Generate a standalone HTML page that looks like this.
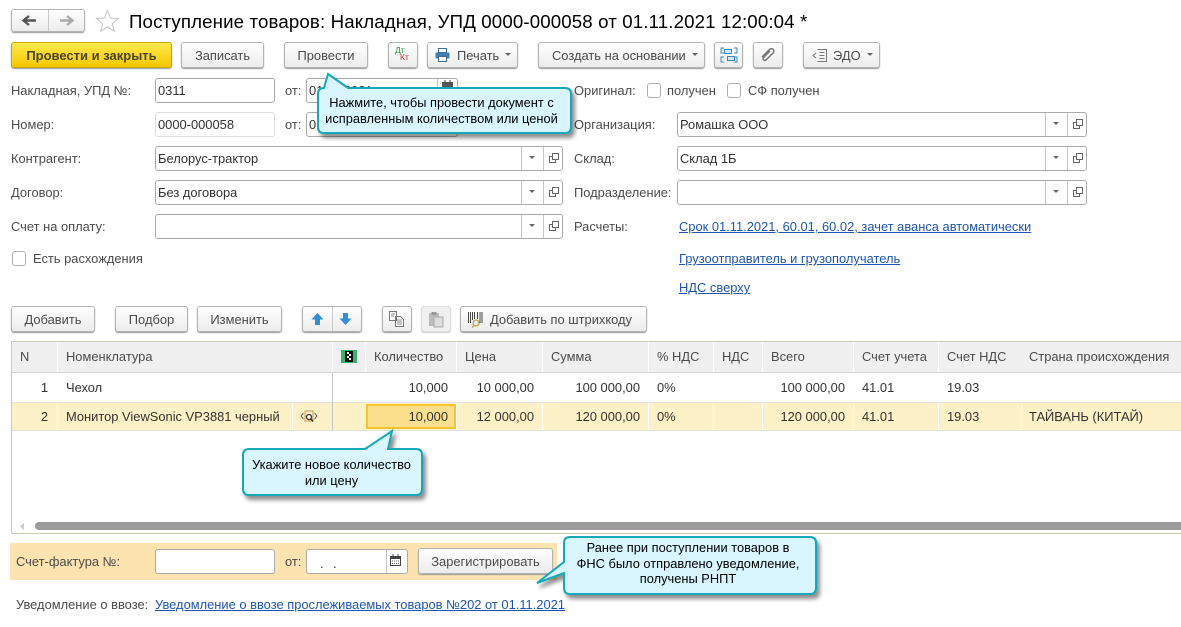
<!DOCTYPE html>
<html lang="ru"><head><meta charset="utf-8"><title>Поступление товаров</title>
<style>
html,body{margin:0;padding:0;background:#fff}
#p{position:relative;width:1181px;height:627px;overflow:hidden;background:#fff;font:12.9px "Liberation Sans",sans-serif;color:#4b4b4b}
#p div,#p span,#p a{position:absolute;white-space:nowrap;box-sizing:border-box}
.t{line-height:14px;margin-top:1px}
.r{text-align:right}
.b{height:26px;border:1px solid #b4b4b4;border-radius:3px;background:linear-gradient(#fff,#ececec);box-shadow:0 1px 1px #999;text-align:center;line-height:26px;color:#4b4b4b}
.f{height:25px;border:1px solid #ababab;border-radius:3px;background:#fff;line-height:23px;padding-left:2px;color:#333}
.s{width:1px;top:0;bottom:0;background:#c4c4c4}
.a{top:10px;width:0;height:0;border-left:3px solid transparent;border-right:3px solid transparent;border-top:3px solid #666}
.l{color:#1f55b0;text-decoration:underline;line-height:14px;margin-top:1px}
.c{width:14px;height:15px;border:1px solid #b0b0b0;border-radius:3px;background:#fff}
.h{top:342px;height:30px;background:#f0f0f0;line-height:29px;color:#4b4b4b;padding-left:8px}
.m{color:#333;line-height:14px}
.o{color:#000;text-align:center;line-height:14px;font-size:12.85px}
svg{position:absolute;overflow:visible}
</style></head><body><div id="p">

<!-- nav -->
<div class="b" style="left:11px;top:9px;width:74px;height:23px"></div>
<div style="left:48px;top:10px;width:1px;height:21px;background:#c8c8c8"></div>
<svg style="left:0;top:0" width="120" height="40"><path d="M24 20.5h12M29 16l-5.500 4.500 5.500 4.500" fill="none" stroke="#555" stroke-width="2.400"/><path d="M60 20.500h12M67 16l5.500 4.500-5.500 4.500" fill="none" stroke="#aaa" stroke-width="2.400"/><path d="M107.500 10.500l3 7.500 8 .5-6.200 5 2.100 7.700-6.900-4.300-6.900 4.300 2.100-7.700-6.200-5 8-.5z" fill="#fff" stroke="#c4c4c4"/></svg>
<span style="left:129px;top:11px;font-size:18.67px;line-height:22px;color:#000;letter-spacing:.14px">Поступление товаров: Накладная, УПД 0000-000058 от 01.11.2021 12:00:04 *</span>

<!-- toolbar -->
<div class="b" style="left:11px;top:42px;width:161px;background:linear-gradient(#ffe94d,#f4c800);border-color:#c9a500;font-weight:bold;font-size:13px;color:#4b4426">Провести и закрыть</div>
<div class="b" style="left:181px;top:42px;width:83px">Записать</div>
<div class="b" style="left:284px;top:42px;width:84px">Провести</div>
<div class="b" style="left:388px;top:42px;width:30px"></div>
<span style="left:395px;top:46px;font-size:8.500px;line-height:9px;color:#1b9a3c">Дт</span>
<span style="left:400px;top:53px;font-size:8.500px;line-height:9px;color:#d9302c">Кт</span>
<div class="b" style="left:427px;top:42px;width:91px"></div>
<span style="left:457px;top:49px;line-height:14px">Печать</span>
<svg style="left:435px;top:48px" width="16" height="15"><rect x="3.500" y=".5" width="8" height="4" fill="#fff" stroke="#3f6c93"/><rect x=".5" y="4.500" width="14" height="6" rx="1" fill="#3f7fb0"/><rect x="3.500" y="8.500" width="8" height="5" fill="#fff" stroke="#3f6c93"/></svg>
<div class="a" style="left:505px;top:53px"></div>
<div class="b" style="left:538px;top:42px;width:167px"></div>
<span style="left:552px;top:49px;line-height:14px">Создать на основании</span>
<div class="a" style="left:692px;top:53px"></div>
<div class="b" style="left:714px;top:42px;width:29px"></div>
<svg style="left:720px;top:47px" width="18" height="16"><path d="M4 1H1v5h3M14 1h3v5h-3M4 15H1v-5h3M14 15h3v-5h-3" fill="none" stroke="#3b8bbd"/><rect x="4.500" y="2.500" width="7" height="4" fill="#cfe6f4" stroke="#3b8bbd"/><rect x="7.500" y="9.500" width="7" height="4" fill="#cfe6f4" stroke="#3b8bbd"/></svg>
<div class="b" style="left:753px;top:42px;width:30px"></div>
<svg style="left:760px;top:47px" width="16" height="16"><path d="M2 10l7.500-7.500c2.500-2.500 6 1 3.500 3.500L6 13c-1.500 1.500-4-1-2.500-2.500L10 4" fill="none" stroke="#777" stroke-width="1.500"/></svg>
<div class="b" style="left:803px;top:42px;width:77px"></div>
<span style="left:833px;top:49px;line-height:14px">ЭДО</span>
<svg style="left:812px;top:48px" width="17" height="15"><path d="M5.500 1.500h9v12h-9M7.500 4.500h5M7.500 7.500h5M7.500 10.500h5M4 5L1 7.500 4 10" fill="none" stroke="#777"/></svg>
<div class="a" style="left:867px;top:53px"></div>

<!-- left form -->
<span class="t" style="left:11px;top:83px">Накладная, УПД №:</span>
<div class="f" style="left:155px;top:78px;width:120px">0311</div>
<span class="t" style="left:285px;top:83px">от:</span>
<div class="f" style="left:306px;top:78px;width:152px">01.11.2021</div>
<div style="left:437px;top:79px;width:1px;height:23px;background:#c4c4c4"></div>
<svg style="left:442px;top:80px" width="12" height="13"><rect x="0" y="2" width="11" height="10" fill="#555"/><path d="M3 0v3M8 0v3" stroke="#444"/></svg>
<span class="t" style="left:11px;top:117px">Номер:</span>
<div class="f" style="left:155px;top:112px;width:120px;border-color:#ddd">0000-000058</div>
<span class="t" style="left:285px;top:117px">от:</span>
<div class="f" style="left:306px;top:112px;width:152px">01.11.2021</div>

<span class="t" style="left:11px;top:151px">Контрагент:</span>
<div class="f" style="left:155px;top:146px;width:408px">Белорус-трактор<span class="s" style="left:365px"></span><span class="s" style="left:387px"></span><span class="a" style="left:373px;top:9px"></span><svg style="left:393px;top:6px" width="12" height="11"><path d="M3.500 3.500H.5v6h6V7M3.500.5h6v6h-6z" fill="none" stroke="#666"/></svg></div>
<span class="t" style="left:11px;top:185px">Договор:</span>
<div class="f" style="left:155px;top:180px;width:408px">Без договора<span class="s" style="left:365px"></span><span class="s" style="left:387px"></span><span class="a" style="left:373px;top:9px"></span><svg style="left:393px;top:6px" width="12" height="11"><path d="M3.500 3.500H.5v6h6V7M3.500.5h6v6h-6z" fill="none" stroke="#666"/></svg></div>
<span class="t" style="left:11px;top:219px">Счет на оплату:</span>
<div class="f" style="left:155px;top:214px;width:408px"><span class="s" style="left:365px"></span><span class="s" style="left:387px"></span><span class="a" style="left:373px;top:9px"></span><svg style="left:393px;top:6px" width="12" height="11"><path d="M3.500 3.500H.5v6h6V7M3.500.5h6v6h-6z" fill="none" stroke="#666"/></svg></div>
<div class="c" style="left:12px;top:251px"></div>
<span class="t" style="left:33px;top:251px">Есть расхождения</span>

<!-- right form -->
<span class="t" style="left:574px;top:83px">Оригинал:</span>
<div class="c" style="left:647px;top:83px"></div>
<span class="t" style="left:667px;top:83px">получен</span>
<div class="c" style="left:727px;top:83px"></div>
<span class="t" style="left:748px;top:83px">СФ получен</span>
<span class="t" style="left:574px;top:117px">Организация:</span>
<div class="f" style="left:677px;top:112px;width:410px">Ромашка ООО<span class="s" style="left:367px"></span><span class="s" style="left:389px"></span><span class="a" style="left:375px;top:9px"></span><svg style="left:395px;top:6px" width="12" height="11"><path d="M3.500 3.500H.5v6h6V7M3.500.5h6v6h-6z" fill="none" stroke="#666"/></svg></div>
<span class="t" style="left:574px;top:151px">Склад:</span>
<div class="f" style="left:677px;top:146px;width:410px">Склад 1Б<span class="s" style="left:367px"></span><span class="s" style="left:389px"></span><span class="a" style="left:375px;top:9px"></span><svg style="left:395px;top:6px" width="12" height="11"><path d="M3.500 3.500H.5v6h6V7M3.500.5h6v6h-6z" fill="none" stroke="#666"/></svg></div>
<span class="t" style="left:574px;top:185px">Подразделение:</span>
<div class="f" style="left:677px;top:180px;width:410px"><span class="s" style="left:367px"></span><span class="s" style="left:389px"></span><span class="a" style="left:375px;top:9px"></span><svg style="left:395px;top:6px" width="12" height="11"><path d="M3.500 3.500H.5v6h6V7M3.500.5h6v6h-6z" fill="none" stroke="#666"/></svg></div>
<span class="t" style="left:574px;top:219px">Расчеты:</span>
<a class="l" style="left:679px;top:219px">Срок 01.11.2021, 60.01, 60.02, зачет аванса автоматически</a>
<a class="l" style="left:679px;top:251px">Грузоотправитель и грузополучатель</a>
<a class="l" style="left:679px;top:280px">НДС сверху</a>

<!-- table toolbar -->
<div class="b" style="left:11px;top:306px;width:84px">Добавить</div>
<div class="b" style="left:115px;top:306px;width:73px">Подбор</div>
<div class="b" style="left:197px;top:306px;width:85px">Изменить</div>
<div class="b" style="left:302px;top:306px;width:60px"></div>
<div style="left:332px;top:307px;width:1px;height:24px;background:#c8c8c8"></div>
<svg style="left:302px;top:306px" width="60" height="26"><path d="M15.500 7l6 6.500h-3.500V19h-5v-5.500H9.500z" fill="#2f8fd8"/><path d="M43.500 19l-6-6.500H41V7h5v5.500h3.500z" fill="#2f8fd8"/></svg>
<div class="b" style="left:382px;top:306px;width:30px"></div>
<svg style="left:389px;top:311px" width="16" height="16"><path d="M.5.5h7v9h-7zM6.500 5.500h5l3 3v7h-8z" fill="#fff" stroke="#777"/><path d="M2 3h4M2 5h3M8 9h5M8 11h5M8 13h5" stroke="#888"/></svg>
<div class="b" style="left:421px;top:306px;width:30px;background:#f0f0f0;border-color:#ddd;box-shadow:0 1px 1px #ccc"></div>
<svg style="left:428px;top:311px" width="16" height="16"><path d="M1 2h10v13H1z" fill="#bbb"/><path d="M6 6h9v10H6z" fill="#ddd" stroke="#aaa"/><rect x="3.500" y="1" width="5" height="3" fill="#999"/></svg>
<div class="b" style="left:460px;top:306px;width:187px"></div>
<span style="left:490px;top:313px;line-height:14px">Добавить по штрихкоду</span>
<svg style="left:468px;top:312px" width="16" height="16"><path d="M.5 0v11M2.500 0v11M4.500 0v8M6.500 0v7M9.500 0v7M12 0v11M14 0v11" stroke="#444"/><circle cx="8" cy="11" r="3" fill="#dfeef7" stroke="#c9a142" stroke-width="1.300"/><path d="M6 13.500l-2 2" stroke="#c9a142" stroke-width="1.500"/></svg>

<!-- table -->
<div style="left:11px;top:341px;width:1170px;height:193px;border-top:1px solid #cfc9b2;border-left:1px solid #cfc9b2;border-bottom:1px solid #cfc9b2"></div>
<div class="h" style="left:12px;width:45px">N</div>
<div class="h" style="left:58px;width:274px">Номенклатура</div>
<div class="h" style="left:333px;width:32px"></div>
<div class="h" style="left:366px;width:90px">Количество</div>
<div class="h" style="left:457px;width:85px">Цена</div>
<div class="h" style="left:543px;width:105px">Сумма</div>
<div class="h" style="left:649px;width:64px">% НДС</div>
<div class="h" style="left:714px;width:48px">НДС</div>
<div class="h" style="left:763px;width:90px">Всего</div>
<div class="h" style="left:854px;width:84px">Счет учета</div>
<div class="h" style="left:939px;width:82px">Счет НДС</div>
<div class="h" style="left:1021px;width:160px">Страна происхождения</div>
<svg style="left:341px;top:350px" width="16" height="13"><rect width="16" height="13" fill="#37b36b"/><rect x="4" y="1" width="8" height="11" fill="#111"/><path d="M6 2h2v2H6zM8 4h2v2H8zM6 6h2v2H6zM8 8h2v2H8z" fill="#fff"/></svg>
<div style="left:12px;top:372px;width:1169px;height:1px;background:#d4d4d4"></div>

<div style="left:12px;top:402px;width:1169px;height:1px;background:#e2e2e2"></div>
<div style="left:12px;top:403px;width:1169px;height:27px;background:#fdf1c8"></div>
<div style="left:12px;top:430px;width:1169px;height:1px;background:#e2e2e2"></div>
<div style="left:57px;top:403px;width:1px;height:27px;background:#fff"></div>
<div style="left:292px;top:403px;width:1px;height:27px;background:#fff"></div>
<div style="left:332px;top:373px;width:1px;height:58px;background:#c8c8c8"></div>
<div style="left:456px;top:403px;width:1px;height:27px;background:#fff"></div>
<div style="left:542px;top:403px;width:1px;height:27px;background:#fff"></div>
<div style="left:648px;top:403px;width:1px;height:27px;background:#fff"></div>
<div style="left:713px;top:403px;width:1px;height:27px;background:#fff"></div>
<div style="left:762px;top:403px;width:1px;height:27px;background:#fff"></div>
<div style="left:853px;top:403px;width:1px;height:27px;background:#fff"></div>
<div style="left:938px;top:403px;width:1px;height:27px;background:#fff"></div>
<div style="left:1021px;top:403px;width:1px;height:27px;background:#fff"></div>
<div style="left:366px;top:404px;width:90px;height:25px;background:#fbdf8c;border:2px solid #f5c52e"></div>

<span class="m r" style="left:20px;width:28px;top:381px">1</span>
<span class="m" style="left:66px;top:381px">Чехол</span>
<span class="m r" style="left:380px;width:68px;top:381px">10,000</span>
<span class="m r" style="left:460px;width:74px;top:381px">10 000,00</span>
<span class="m r" style="left:550px;width:90px;top:381px">100 000,00</span>
<span class="m" style="left:657px;top:381px">0%</span>
<span class="m r" style="left:765px;width:80px;top:381px">100 000,00</span>
<span class="m" style="left:862px;top:381px">41.01</span>
<span class="m" style="left:947px;top:381px">19.03</span>

<span class="m r" style="left:20px;width:28px;top:410px">2</span>
<span class="m" style="left:66px;top:410px">Монитор ViewSonic VP3881 черный</span>
<svg style="left:300px;top:409px" width="18" height="15"><path d="M3.500 4L1 7l2.500 3M14.500 4L17 7l-2.500 3" fill="none" stroke="#666"/><rect x="5" y="2" width="8" height="10" fill="none" stroke="#c99a50"/><circle cx="9" cy="8" r="2.500" fill="#fff" stroke="#333" stroke-width="1.300"/><path d="M11 10l2 2.500" stroke="#333" stroke-width="1.500"/></svg>
<span class="m r" style="left:380px;width:68px;top:410px">10,000</span>
<span class="m r" style="left:460px;width:74px;top:410px">12 000,00</span>
<span class="m r" style="left:550px;width:90px;top:410px">120 000,00</span>
<span class="m" style="left:657px;top:410px">0%</span>
<span class="m r" style="left:765px;width:80px;top:410px">120 000,00</span>
<span class="m" style="left:862px;top:410px">41.01</span>
<span class="m" style="left:947px;top:410px">19.03</span>
<span class="m" style="left:1029px;top:410px">ТАЙВАНЬ (КИТАЙ)</span>

<div style="left:35px;top:522px;width:1146px;height:8px;background:#9b9b9b;border-radius:4px 0 0 4px"></div>
<svg style="left:20px;top:523px" width="6" height="7"><path d="M4 0v7L0 3.500z" fill="#ccc"/></svg>

<!-- bottom -->
<div style="left:10px;top:543px;width:547px;height:37px;background:#fde3b0"></div>
<span class="t" style="left:16px;top:554px">Счет-фактура №:</span>
<div class="f" style="left:155px;top:549px;width:120px"></div>
<span class="t" style="left:285px;top:554px">от:</span>
<div class="f" style="left:306px;top:549px;width:102px"><span style="left:13px;top:1px;line-height:25px">.</span><span style="left:26px;top:1px;line-height:25px">.</span><span class="s" style="left:79px"></span></div>
<svg style="left:390px;top:554px" width="12" height="13"><rect x=".5" y="2.500" width="10" height="9" fill="#fff" stroke="#444"/><rect x="0" y="2" width="11" height="3" fill="#444"/><path d="M3 0v3M8 0v3" stroke="#444"/><path d="M2 7h7M2 9.500h7" stroke="#666" stroke-dasharray="1 1"/></svg>
<div class="b" style="left:418px;top:548px;width:135px">Зарегистрировать</div>
<span class="t" style="left:16px;top:597px">Уведомление о ввозе:</span>
<a class="l" style="left:155px;top:597px">Уведомление о ввозе прослеживаемых товаров №202 от 01.11.2021</a>

<!-- callouts -->
<svg style="left:0;top:0;pointer-events:none" width="1181" height="627">
<defs><filter id="d" x="-10%" y="-20%" width="125%" height="150%"><feDropShadow dx="3" dy="4" stdDeviation="2" flood-color="#000" flood-opacity=".45"/></filter></defs>
<g fill="#d9f6fe" stroke="#12a8b8" stroke-width="2" filter="url(#d)">
<path d="M328 74L348 88H565q6 0 6 6v33q0 6-6 6H324q-6 0-6-6V94q0-6 6-6z"/>
<path d="M392 431L388 449H416q6 0 6 6v34q0 6-6 6H249q-6 0-6-6V455q0-6 6-6H365z"/>
<path d="M537 583L564 562V543q0-6 6-6H810q6 0 6 6v45q0 6-6 6H570q-6 0-6-6V573z"/>
</g>
</svg>
<span class="o" style="left:315px;top:96px;width:253px">Нажмите, чтобы провести документ с</span>
<span class="o" style="left:315px;top:112px;width:253px">исправленным количеством или ценой</span>
<span class="o" style="left:242px;top:458px;width:179px">Укажите новое количество</span>
<span class="o" style="left:242px;top:474px;width:179px">или цену</span>
<span class="o" style="left:562px;top:541px;width:252px">Ранее при поступлении товаров в</span>
<span class="o" style="left:562px;top:557px;width:252px">ФНС было отправлено уведомление,</span>
<span class="o" style="left:562px;top:572px;width:252px">получены РНПТ</span>
</div></body></html>
